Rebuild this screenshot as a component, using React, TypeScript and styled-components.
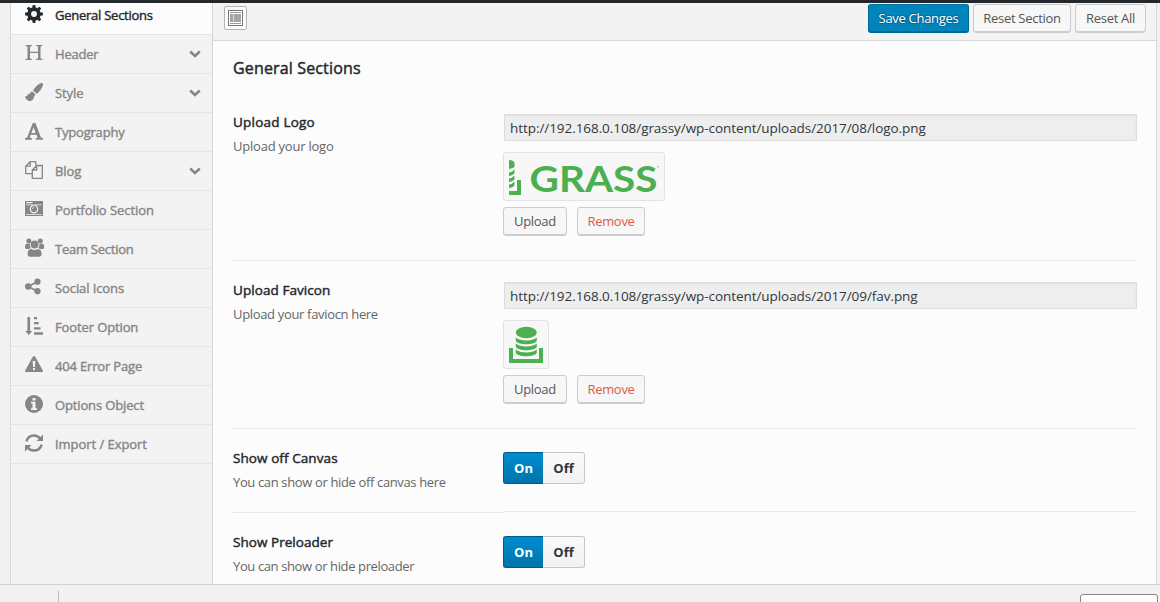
import React from "react";
import styled, { createGlobalStyle, css } from "styled-components";

const Global = createGlobalStyle`
  * { box-sizing: border-box; }
  html, body { margin: 0; overflow: hidden; background: #f1f1f1; }
  body { font-family: "Open Sans", "Noto Sans", sans-serif; font-size: 13px; color: #555; }
`;

const Page = styled.div`
  display: flex;
  flex-direction: column;
  width: 1160px;
  height: 602px;
  overflow: hidden;
`;
const AdminBar = styled.div`
  flex: none;
  height: 3px;
  background: #23282d;
`;
const Panel = styled.div`
  display: flex;
  flex: none;
  height: 581px;
  margin-left: 10px;
  width: 1147px;
  border: 1px solid #d8d8d8;
  border-width: 0 1px;
  background: #fcfcfc;
`;
const Sidebar = styled.nav`
  flex: none;
  width: 202px;
  height: 581px;
  background: #f3f3f3;
  border-right: 1px solid #d4d4d4;
`;
const MenuItem = styled.a<{ $active?: boolean }>`
  display: flex;
  align-items: flex-start;
  height: ${(p) => (p.$active ? 32 : 39)}px;
  padding: ${(p) => (p.$active ? 2 : 9)}px 11px 0 14px;
  border-bottom: 1px solid #e5e5e5;
  color: ${(p) => (p.$active ? "#23282d" : "#868686")};
  background: ${(p) => (p.$active ? "#fcfcfc" : "transparent")};
`;
const MenuIcon = styled.svg`
  flex: none;
  width: 18px;
  height: 18px;
  overflow: visible;
  color: inherit;
`;
const MenuText = styled.span<{ $track: number }>`
  flex: 1;
  margin-left: 12px;
  padding-top: 1px;
  line-height: 18px;
  font-weight: 400;
  -webkit-text-stroke: 0.4px currentColor;
  white-space: nowrap;
  letter-spacing: ${(p) => p.$track}px;
`;
const Chevron = styled.svg`
  flex: none;
  width: 12px;
  height: 8px;
  margin-top: 6px;
`;
const Main = styled.main`
  flex: 1;
  min-width: 0;
`;
const Toolbar = styled.div`
  display: flex;
  height: 38px;
  padding: 1px 10px 0 11px;
  border-bottom: 1px solid #d8d8d8;
  background: #f3f3f3;
`;
const LayoutButton = styled.button`
  width: 23px;
  height: 24px;
  margin: 2px auto 0 0;
  padding: 3px;
  border: 1px solid #b4b4b4;
  border-radius: 2px;
  background: #fafafa;
  svg { display: block; }
`;
const Actions = styled.div`
  display: flex;
  gap: 4px;
`;
const Button = styled.button<{ $w: number; $kind?: "primary" | "danger"; $track?: number }>`
  width: ${(p) => p.$w}px;
  height: 29px;
  padding: 0 0 1px;
  border: 1px solid #ccc;
  border-radius: 3px;
  background: #f7f7f7;
  box-shadow: inset 0 -1px 0 #ccc;
  color: #555;
  font: 400 13px/26px "Open Sans", "Noto Sans", sans-serif;
  letter-spacing: ${(p) => p.$track ?? -0.3}px;
  white-space: nowrap;
  ${(p) =>
    p.$kind === "primary" &&
    css`
      border-color: #0073aa #006799 #006799;
      background: #0085ba;
      box-shadow: inset 0 -1px 0 #006799;
      color: #fff;
      text-shadow: 0 -1px 1px #006799, 1px 0 1px #006799, 0 1px 1px #006799, -1px 0 1px #006799;
    `}
  ${(p) => p.$kind === "danger" && css`color: #dd5a43;`}
`;
const Body = styled.section`
  padding-left: 20px;
`;
const Heading = styled.h2`
  height: 52px;
  margin: 0;
  padding-top: 16px;
  color: #23282d;
  font-size: 16px;
  line-height: 22px;
  font-weight: 400;
  -webkit-text-stroke: 0.45px currentColor;
  letter-spacing: 0.15px;
`;
const Field = styled.div`
  display: flex;
  align-items: flex-start;
`;
const LabelCell = styled.div<{ $h: number }>`
  flex: none;
  width: 270px;
  height: ${(p) => p.$h}px;
  padding-top: 19px;
  border-bottom: 1px solid #e7e7e7;
`;
const FieldTitle = styled.div<{ $track: number }>`
  line-height: 20px;
  color: #23282d;
  font-size: 13.5px;
  font-weight: 400;
  -webkit-text-stroke: 0.45px currentColor;
  letter-spacing: ${(p) => p.$track}px;
`;
const FieldDesc = styled.div<{ $track: number }>`
  margin-top: 4px;
  line-height: 20px;
  color: #666;
  letter-spacing: ${(p) => p.$track}px;
`;
const ControlCell = styled.div<{ $h: number }>`
  width: 633px;
  height: ${(p) => p.$h}px;
  border-bottom: 1px solid #e7e7e7;
`;
const UrlInput = styled.input`
  display: block;
  width: 633px;
  height: 27px;
  margin: 21px 0 0 1px;
  padding: 0 5px;
  border: 1px solid #ddd;
  background: #eee;
  box-shadow: inset 0 1px 2px rgba(0, 0, 0, 0.07);
  color: #32373c;
  font: 400 13.5px "Open Sans", "Noto Sans", sans-serif;
  letter-spacing: -0.06px;
`;
const Preview = styled.div<{ $w: number }>`
  width: ${(p) => p.$w}px;
  height: 49px;
  margin: 11px 0 6px;
  border: 1px solid #e3e3e3;
  border-radius: 3px;
  background: #f7f7f7;
  svg { display: block; }
`;
const ButtonPair = styled.div`
  display: flex;
  gap: 10px;
`;
const Switch = styled.div`
  display: flex;
  margin-top: 23px;
`;
const SwitchHalf = styled.span<{ $on?: boolean }>`
  width: ${(p) => (p.$on ? 40 : 42)}px;
  height: 32px;
  border: 1px solid #c6c6c6;
  border-left: 0;
  border-radius: 0 3px 3px 0;
  background: linear-gradient(#fafafa, #f2f2f2);
  color: #333;
  font-weight: 700;
  line-height: 31px;
  text-align: center;
  ${(p) =>
    p.$on &&
    css`
      border: 1px solid #005a87;
      border-right: 0;
      border-radius: 3px 0 0 3px;
      background: linear-gradient(#008dd0, #0073aa);
      color: #fff;
    `}
`;
const Footer = styled.footer`
  display: flex;
  justify-content: space-between;
  flex: none;
  height: 18px;
  padding: 0 2px 0 58px;
  border-top: 1px solid #d2d2d2;
  background: #f1f1f1;
`;
const Tick = styled.span`
  width: 1px;
  height: 11px;
  margin-top: 6px;
  background: #b9b9b9;
`;
const FooterBox = styled.span`
  width: 78px;
  height: 20px;
  margin-top: 9px;
  border: 1px solid #858585;
  border-radius: 3px;
  background: #fcfcfc;
`;

const G = "#4caf50";

const icons: Record<string, React.ReactNode> = {
  cog: (
    <g>
      <circle cx="9" cy="9" r="4.8" fill="none" stroke="currentColor" strokeWidth="3.8" />
      {[0, 45, 90, 135, 180, 225, 270, 315].map((a) => (
        <path key={a} d="M7.3 3L7.6 0.3Q9 -.2 10.4 .3L10.7 3z" fill="currentColor" transform={`rotate(${a} 9 9)`} />
      ))}
    </g>
  ),
  header: (
    <path
      fill="currentColor"
      d="M.6 1h6.3v1L5 2.4V7.8h8V2.4L11.1 2V1h6.3v1l-1.9.4v12.2l1.9.4V16h-6.3v-1l1.9-.4V9H5v5.6l1.9.4V16H.6v-1l1.9-.4V2.4L.6 2z"
    />
  ),
  brush: (
    <g fill="currentColor">
      <path d="M17.3.1c.9.5.9 1.6.4 2.8-1.2 3-3.6 6.2-6.3 8.2-.6-1.8-1.9-3-3.6-3.4C9.6 4.8 12.3 2 15 .5c.9-.6 1.6-.8 2.3-.4z" />
      <path d="M6.6 8.5c2 .3 3.4 1.7 3.7 3.6-.5.6-.9.8-1.2.9.2 2.9-2 5-4.6 5-2.3 0-4.100-2-4.500-5.200 1.200.8 2 .8 2.400-.3.500-1.200 1.500-1.900 2.700-1.900.3-.7.800-1.500 1.500-2.100z" />
    </g>
  ),
  font: (
    <path
      fill="currentColor"
      fillRule="evenodd"
      d="M7.8.9h2.6l5.5 14.6 2.1.7v1.6h-7.3v-1.600l1.900-.5-1-3H5.700l-1 3 2.200.5v1.600H0v-1.600l2.100-.7zM8.500 5.200L6.400 11h4.300z"
    />
  ),
  files: (
    <g fill="none" stroke="currentColor" strokeWidth="1.3" strokeLinejoin="round">
      <path d="M7.3 12.6H.7V5.2L5.1.7h5.7v3.6M5.1.7v4.5H.7" />
      <path d="M7.3 17.3V9L11.7 4.5h5.6v12.8zM11.7 4.5V9H7.3" />
    </g>
  ),
  camera: (
    <path
      fill="currentColor"
      fillRule="evenodd"
      d="M0 1h18v15H0zM1.3 2v1.2h6.2V2zM1.2 4.4v.9h15.600v-.9zM1.200 13.900v.9h15.600v-.9zM9 4.800a4.300 4.300 0 1 0 0 8.600a4.300 4.300 0 1 0 0-8.600zM9 6a3.100 3.100 0 1 1 0 6.200a3.100 3.100 0 1 1 0-6.200zM9 7.200a1.900 1.900 0 0 0-1.900 1.900h.8A1.100 1.100 0 0 1 9 8z"
    />
  ),
  team: (
    <g fill="currentColor">
      <circle cx="3.9" cy="1.9" r="2.5" />
      <circle cx="15.3" cy="1.9" r="2.5" />
      <circle cx="9.6" cy="5.5" r="3.9" />
      <path d="M2 4.700h2.900c-.3 1.700.1 3.300 1.100 4.500C5.100 9.300 4.400 9.600 3.800 10H1.600C.3 10 0 9.200 0 8.100 0 6.300.5 4.700 2 4.700z" />
      <path d="M17.200 4.700h-2.900c.3 1.700-.1 3.300-1.100 4.500.9.100 1.600.4 2.200.8h2.200c1.300 0 1.600-.8 1.600-1.900 0-1.800-.5-3.400-2-3.400z" />
      <path d="M6 9.900c2.300 1.500 4.900 1.500 7.200 0 2.400.2 3.400 2.200 3.400 5.100 0 1.700-1 2.800-2.600 2.800H5.200c-1.600 0-2.600-1.100-2.600-2.800 0-2.900 1-4.900 3.400-5.100z" />
    </g>
  ),
  share: (
    <g fill="currentColor">
      <path d="M3 8.5L12.5 3.7M3 8.5l9.5 4.8" stroke="currentColor" strokeWidth="1.8" />
      <circle cx="3.2" cy="8.5" r="3.2" />
      <circle cx="12.5" cy="3.7" r="3.1" />
      <circle cx="12.5" cy="13.2" r="3.1" />
    </g>
  ),
  sort: (
    <path
      fill="currentColor"
      d="M2.4 0h2.7v14h2.2L3.800 18 .3 14h2.100zM9 .1h3v2.200H9zM9 5.100h4.700v2.200H9zM9 10.200h6.500v2.200H9zM9 15.300h9v2.500H9z"
    />
  ),
  warning: (
    <path
      fill="currentColor"
      fillRule="evenodd"
      d="M9 0c.6 0 .9.300 1.200.8l7.600 13.600c.4.900 0 1.600-.9 1.600H1.100c-.9 0-1.300-.7-.9-1.600L7.800.8C8.100.3 8.400 0 9 0zM7.600 5l.5 6h1.800l.5-6zM8 12v2.200h2V12z"
    />
  ),
  info: (
    <path
      fill="currentColor"
      fillRule="evenodd"
      d="M9 0a9 9 0 1 0 0 18A9 9 0 1 0 9 0zM7.500 3h3v2.400h-3zM6 6.800h4.500v6.400h1.500v1.700H6v-1.700h1.500V8.500H6z"
    />
  ),
  refresh: (
    <g fill="currentColor">
      <path d="M1.400 7.400C2.400 3.800 5.300 1.400 9 1.400c2.500 0 4.700 1 6.200 3" fill="none" stroke="currentColor" strokeWidth="2.5" />
      <path d="M16.600 10.600c-1 3.600-3.900 6-7.600 6-2.500 0-4.700-1-6.200-3" fill="none" stroke="currentColor" strokeWidth="2.5" />
      <path d="M18 .5V7h-6.500zM0 17.500V11h6.500z" />
    </g>
  ),
};

const menu: { icon: string; label: string; track: number; open?: boolean }[] = [
  { icon: "cog", label: "General Sections", track: -0.25 },
  { icon: "header", label: "Header", track: -0.2, open: true },
  { icon: "brush", label: "Style", track: -0.1, open: true },
  { icon: "font", label: "Typography", track: -0.2 },
  { icon: "files", label: "Blog", track: -0.1, open: true },
  { icon: "camera", label: "Portfolio Section", track: -0.06 },
  { icon: "team", label: "Team Section", track: -0.25 },
  { icon: "share", label: "Social Icons", track: -0.1 },
  { icon: "sort", label: "Footer Option", track: -0.12 },
  { icon: "warning", label: "404 Error Page", track: -0.17 },
  { icon: "info", label: "Options Object", track: -0.14 },
  { icon: "refresh", label: "Import / Export", track: -0.05 },
];

const LogoArt = () => (
  <svg width="160" height="47" viewBox="504 153 160 47">
    <g fill={G}>
      <path d="M509 160q5.500 0 5.500 3.500v3q-1 2-5.500 2.400z" />
      <path d="M509 172.500q3.500-.5 5.500-3v3.500q-1 2-5.500 3zM509 178.500q3.500-.5 5.500-3v3.500q-1 2-5.500 3zM509 184.500q3.500-.5 5.500-3v3.500q-1 2.500-5.500 3z" />
      <path d="M517 180h4v15h-12v-4h8z" />
      <text
        x="529.5"
        y="191.5"
        fontFamily="Lato, sans-serif"
        fontWeight="700"
        fontSize="35.5"
        textLength="128"
        lengthAdjust="spacingAndGlyphs"
      >
        GRASS
      </text>
      <rect x="657.5" y="166" width="1" height="1.5" />
    </g>
  </svg>
);

const FaviconArt = () => (
  <svg width="44" height="47" viewBox="504 321 44 47">
    <g fill={G}>
      <path d="M509 348h4v11h26v-11h4v15h-34z" />
      <ellipse cx="526.3" cy="332.5" rx="10.5" ry="5.7" />
      {[0, 6, 12].map((d) => (
        <path key={d} transform={`translate(0 ${d})`} d="M515.8 337.5c4 3.9 17 3.9 21 0v3c-1 5-20 5-21 0z" />
      ))}
    </g>
  </svg>
);

const UploadField = (p: { title: string; desc: string; tt: number; dt: number; url: string; w: number; art: React.ReactNode }) => (
  <Field>
    <LabelCell $h={168}>
      <FieldTitle $track={p.tt}>{p.title}</FieldTitle>
      <FieldDesc $track={p.dt}>{p.desc}</FieldDesc>
    </LabelCell>
    <ControlCell $h={168}>
      <UrlInput readOnly value={p.url} />
      <Preview $w={p.w}>{p.art}</Preview>
      <ButtonPair>
        <Button $w={64}>Upload</Button>
        <Button $w={68} $kind="danger">Remove</Button>
      </ButtonPair>
    </ControlCell>
  </Field>
);

const SwitchField = (p: { title: string; desc: string; tt: number; dt: number }) => (
  <Field>
    <LabelCell $h={84}>
      <FieldTitle $track={p.tt}>{p.title}</FieldTitle>
      <FieldDesc $track={p.dt}>{p.desc}</FieldDesc>
    </LabelCell>
    <ControlCell $h={83}>
      <Switch>
        <SwitchHalf $on>On</SwitchHalf>
        <SwitchHalf>Off</SwitchHalf>
      </Switch>
    </ControlCell>
  </Field>
);

export default function App() {
  return (
    <Page>
      <Global />
      <AdminBar />
      <Panel>
        <Sidebar>
          {menu.map((m, i) => (
            <MenuItem key={m.label} $active={i === 0}>
              <MenuIcon viewBox="0 0 18 18">{icons[m.icon]}</MenuIcon>
              <MenuText $track={m.track}>{m.label}</MenuText>
              {m.open && (
                <Chevron viewBox="0 0 12 8">
                  <path d="M1.2 1.5L6 5.9l4.8-4.4" fill="none" stroke="#868686" strokeWidth="2.6" />
                </Chevron>
              )}
            </MenuItem>
          ))}
        </Sidebar>
        <Main>
          <Toolbar>
            <LayoutButton>
              <svg width="15" height="16" viewBox="0 0 15 16">
                <rect x=".5" y=".5" width="14" height="15" fill="#fff" stroke="#777" />
                <path d="M2 2.5h11M2 13.5h11" stroke="#999" />
                <path d="M2 4h3v8H2zM5.6 4h7.4v8H5.6z" fill="#a5a5a5" />
              </svg>
            </LayoutButton>
            <Actions>
              <Button $w={101} $kind="primary">Save Changes</Button>
              <Button $w={98}>Reset Section</Button>
              <Button $w={71}>Reset All</Button>
            </Actions>
          </Toolbar>
          <Body>
            <Heading>General Sections</Heading>
            <UploadField
              title="Upload Logo"
              desc="Upload your logo"
              tt={0.22}
              dt={-0.22}
              url="http://192.168.0.108/grassy/wp-content/uploads/2017/08/logo.png"
              w={162}
              art={<LogoArt />}
            />
            <UploadField
              title="Upload Favicon"
              desc="Upload your faviocn here"
              tt={0.07}
              dt={-0.33}
              url="http://192.168.0.108/grassy/wp-content/uploads/2017/09/fav.png"
              w={46}
              art={<FaviconArt />}
            />
            <SwitchField title="Show off Canvas" desc="You can show or hide off canvas here" tt={0.08} dt={-0.36} />
            <SwitchField title="Show Preloader" desc="You can show or hide preloader" tt={0.04} dt={-0.38} />
          </Body>
        </Main>
      </Panel>
      <Footer>
        <Tick />
        <FooterBox />
      </Footer>
    </Page>
  );
}
